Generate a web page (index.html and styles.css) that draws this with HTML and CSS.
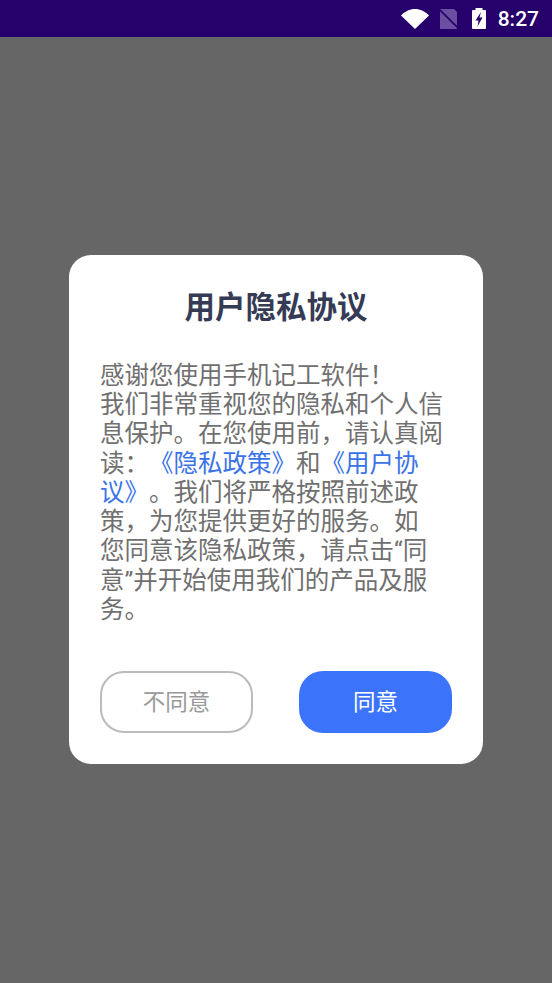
FILE: index.html
```html
<!DOCTYPE html>
<html lang="zh-CN">
<head>
  <meta name="viewport" content="width=device-width, initial-scale=1.0">
  <title>用户隐私协议</title>
  <link rel="stylesheet" href="styles.css">
</head>
<body>
  <div class="status-bar">
    <svg class="icon-wifi" viewBox="0 0 28 20"><path d="M0 6.500C3.800 2.600 8.600 0 14 0s10.200 2.600 14 6.500L14 20z" fill="#fff"/></svg>
    <svg class="icon-sim" viewBox="0 0 20 20">
      <path d="M1 0H15L18 3V20H1z" fill="#6b4fa0"/>
      <path d="M0 0L20 20" stroke="#26006b" stroke-width="1.600"/>
    </svg>
    <svg class="icon-battery" viewBox="0 0 14 21">
      <path d="M3.500 0h7v2H13a1 1 0 0 1 1 1v17a1 1 0 0 1-1 1H1a1 1 0 0 1-1-1V3a1 1 0 0 1 1-1h2.500z" fill="#fff"/>
      <path d="M9 4L3.500 12.500H6.500L5.500 18.500L10.500 9.500H7.500z" fill="#26006b"/>
    </svg>
    <span class="clock">8:27</span>
  </div>

  <div class="overlay">
    <div class="dialog">
      <h1>用户隐私协议</h1>
      <p class="message">感谢您使用手机记工软件！<br>我们非常重视您的隐私和个人信息保护。在您使用前，请认真阅读：<a href="#">《隐私政策》</a>和<a href="#">《用户协议》</a>。我们将严格按照前述政策，为您提供更好的服务。如<br>您同意该隐私政策，请点击“同意”并开始使用我们的产品及服务。</p>
      <div class="buttons">
        <button class="btn-decline">不同意</button>
        <button class="btn-agree">同意</button>
      </div>
    </div>
  </div>
</body>
</html>
```

FILE: styles.css
```css
body {
  font-family: Roboto, "Noto Sans CJK SC", sans-serif;
  background-color: #666;
  margin: 0;
  height: 983px;
  display: flex;
  flex-direction: column;
  overflow: hidden;
}

.status-bar {
  display: flex;
  align-items: center;
  justify-content: flex-end;
  height: 37px;
  background-color: #26006b;
  padding-right: 13px;
  color: #fff;
}

.icon-wifi {
  width: 28px;
  height: 20px;
  margin-right: 10px;
}

.icon-sim {
  width: 20px;
  height: 20px;
  margin-right: 13px;
}

.icon-battery {
  width: 14px;
  height: 21px;
  margin-right: 12px;
}

.clock {
  font-size: 21px;
  font-weight: 500;
}

.overlay {
  flex: 1;
  display: flex;
  align-items: center;
  justify-content: center;
  padding-bottom: 1px;
}

.dialog {
  width: 414px;
  box-sizing: border-box;
  padding: 33px 31px 31px;
  background-color: #fff;
  border-radius: 22px;
}

h1 {
  margin: 0 0 33px;
  font-size: 30.500px;
  line-height: 40px;
  font-weight: 700;
  text-align: center;
  color: #353b55;
}

.message {
  margin: 0 0 47px;
  font-size: 24.500px;
  line-height: 29.200px;
  color: #707070;
  text-spacing-trim: space-all;
}

.message a {
  color: #3a72e8;
  text-decoration: none;
}

.buttons {
  display: flex;
  justify-content: space-between;
}

button {
  width: 153px;
  height: 62px;
  box-sizing: border-box;
  padding: 0 0 3px;
  border-radius: 24px;
  font-family: inherit;
  font-size: 22.500px;
}

.btn-decline {
  background-color: #fff;
  border: 2px solid #bbb;
  color: #999;
}

.btn-agree {
  background-color: #3b74fb;
  border: none;
  color: #fff;
}
```
